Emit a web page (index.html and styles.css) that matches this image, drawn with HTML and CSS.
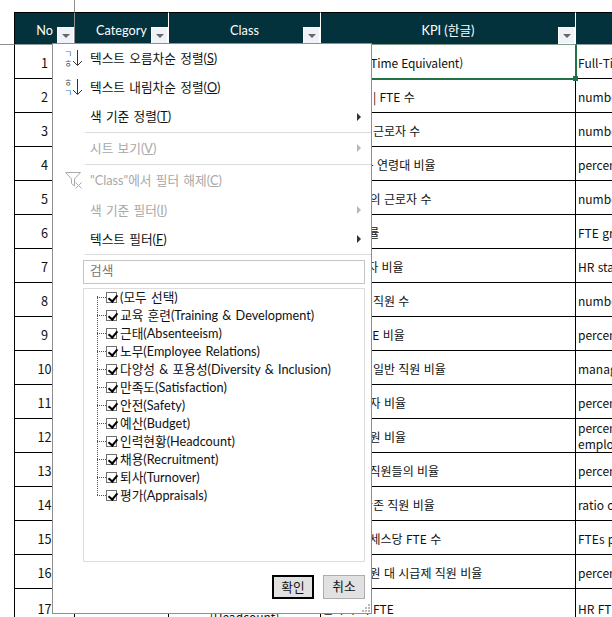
FILE: index.html
```html
<!DOCTYPE html>
<html lang="ko">
<head>
<meta charset="utf-8">
<title>KPI 필터</title>
<link rel="stylesheet" href="styles.css">
</head>
<body>
<main class="sheet">
  <table class="grid">
    <colgroup><col class="c-no"><col class="c-cat"><col class="c-class"><col class="c-kpi"><col class="c-desc"></colgroup>
    <thead>
      <tr>
        <th class="th-no">No<span class="drop"></span></th>
        <th>Category<span class="drop"></span></th>
        <th>Class<span class="drop"></span></th>
        <th>KPI (한글)<span class="drop"></span></th>
        <th></th>
      </tr>
    </thead>
    <tbody>
      <tr><td class="num">1</td><td></td><td></td><td class="kpi selected">FTE(Full-Time Equivalent)<span class="handle"></span></td><td class="desc">Full-Time Equivalent</td></tr>
      <tr><td class="num">2</td><td></td><td></td><td class="kpi">해당 부서 | FTE 수</td><td class="desc">number of FTE</td></tr>
      <tr><td class="num">3</td><td></td><td></td><td class="kpi">파트 타임 근로자 수</td><td class="desc">number of workers</td></tr>
      <tr><td class="num">4</td><td></td><td></td><td class="kpi">평균근무 - 연령대 비율</td><td class="desc">percentage of age</td></tr>
      <tr><td class="num">5</td><td></td><td></td><td class="kpi">파트 타임의 근로자 수</td><td class="desc">number of workers</td></tr>
      <tr><td class="num">6</td><td></td><td></td><td class="kpi">FTE 성장률</td><td class="desc">FTE growth</td></tr>
      <tr><td class="num">7</td><td></td><td></td><td class="kpi">HR 담당 자 비율</td><td class="desc">HR staff ratio</td></tr>
      <tr><td class="num">8</td><td></td><td></td><td class="kpi">파트 타임 직원 수</td><td class="desc">number of staff</td></tr>
      <tr><td class="num">9</td><td></td><td></td><td class="kpi">계약직 FTE 비율</td><td class="desc">percentage of FTE</td></tr>
      <tr><td class="num">10</td><td></td><td></td><td class="kpi">관리자 대 일반 직원 비율</td><td class="desc">management ratio</td></tr>
      <tr><td class="num">11</td><td></td><td></td><td class="kpi">여성 근로자 비율</td><td class="desc">percentage of women</td></tr>
      <tr><td class="num">12</td><td></td><td></td><td class="kpi">장애인 직원 비율</td><td class="desc two">percentage of<br>employees</td></tr>
      <tr><td class="num">13</td><td></td><td></td><td class="kpi">교육받은 직원들의 비율</td><td class="desc">percentage of staff</td></tr>
      <tr><td class="num">14</td><td></td><td></td><td class="kpi">입사 후 잔존 직원 비율</td><td class="desc">ratio of staff</td></tr>
      <tr><td class="num">15</td><td></td><td></td><td class="kpi">핵심 프로세스당 FTE 수</td><td class="desc">FTEs per process</td></tr>
      <tr><td class="num">16</td><td></td><td></td><td class="kpi">정규직 직원 대 시급제 직원 비율</td><td class="desc">percentage of staff</td></tr>
      <tr class="tall"><td class="num">17</td><td></td><td class="center">인력현황<br>(Headcount)</td><td class="kpi">인사 부서 FTE</td><td class="desc">HR FTE</td></tr>
    </tbody>
  </table>

  <section class="menu">
    <div class="item h29">
      <svg class="icon" width="18" height="18" viewBox="0 0 18 18"><text class="ic-blue" x="-1" y="7" font-size="9">ㄱ</text><text class="ic-gray" x="-1" y="17" font-size="9">ㅎ</text><path class="ic-arrow" d="M12.500 0v15M8 11l4.500 4.500 4.500-4.500"/></svg>
      <span>텍스트 오름차순 정렬(<u>S</u>)</span>
    </div>
    <div class="item h29">
      <svg class="icon" width="18" height="18" viewBox="0 0 18 18"><text class="ic-gray" x="-1" y="7" font-size="9">ㅎ</text><text class="ic-blue" x="-1" y="17" font-size="9">ㄱ</text><path class="ic-arrow" d="M12.500 0v15M8 11l4.500 4.500 4.500-4.500"/></svg>
      <span>텍스트 내림차순 정렬(<u>O</u>)</span>
    </div>
    <div class="item h29 plain"><span>색 기준 정렬(<u>T</u>)</span><i class="chev"></i></div>
    <hr class="sep">
    <div class="item h30 low plain off"><span>시트 보기(<u>V</u>)</span><i class="chev"></i></div>
    <hr class="sep">
    <div class="item h30 low off">
      <svg class="icon" width="18" height="18" viewBox="0 0 18 18"><path class="ic-funnel" d="M.5 1.500h15l-6 6.500v7l-3-2.500v-4.500z"/><path class="ic-x" d="M10.500 11.500l6 6M16.500 11.500l-6 6"/></svg>
      <span>"Class"에서 필터 해제(<u>C</u>)</span>
    </div>
    <div class="item h29 low plain off"><span>색 기준 필터(<u>I</u>)</span><i class="chev"></i></div>
    <div class="item h29 low plain"><span>텍스트 필터(<u>F</u>)</span><i class="chev"></i></div>
    <hr class="sep">
    <div class="search">검색</div>
    <div class="list">
      <ul class="tree">
        <li><span class="dots"></span><span class="box"></span><span class="label">(모두 선택)</span></li>
        <li><span class="dots"></span><span class="box"></span><span class="label">교육 훈련(Training &amp; Development)</span></li>
        <li><span class="dots"></span><span class="box"></span><span class="label">근태(Absenteeism)</span></li>
        <li><span class="dots"></span><span class="box"></span><span class="label">노무(Employee Relations)</span></li>
        <li><span class="dots"></span><span class="box"></span><span class="label">다양성 &amp; 포용성(Diversity &amp; Inclusion)</span></li>
        <li><span class="dots"></span><span class="box"></span><span class="label">만족도(Satisfaction)</span></li>
        <li><span class="dots"></span><span class="box"></span><span class="label">안전(Safety)</span></li>
        <li><span class="dots"></span><span class="box"></span><span class="label">예산(Budget)</span></li>
        <li><span class="dots"></span><span class="box"></span><span class="label">인력현황(Headcount)</span></li>
        <li><span class="dots"></span><span class="box"></span><span class="label">채용(Recruitment)</span></li>
        <li><span class="dots"></span><span class="box"></span><span class="label">퇴사(Turnover)</span></li>
        <li><span class="dots"></span><span class="box"></span><span class="label">평가(Appraisals)</span></li>
      </ul>
    </div>
    <div class="actions">
      <button class="btn primary">확인</button>
      <button class="btn">취소</button>
    </div>
    <svg class="grip" width="9" height="8" viewBox="0 0 9 8"><path d="M6 0h2v2H6zM3 3h2v2H3zM6 3h2v2H6zM0 6h2v2H0zM3 6h2v2H3zM6 6h2v2H6z"/></svg>
  </section>
</main>
</body>
</html>
```
FILE: styles.css
```css
* { box-sizing: border-box; }
html, body { margin: 0; height: 617px; overflow: hidden; background: #fff; }
body { font-family: Lato, "Noto Sans CJK KR", sans-serif; font-size: 12.7px; color: #111; }

.sheet { position: relative; width: 612px; height: 617px; overflow: hidden; padding: 12px 0 0 14px; }
.sheet::before { content: ""; position: absolute; left: 74px; top: 0; width: 1px; height: 12px; background: #8f8f8f; }
.sheet::after { content: ""; position: absolute; left: 0; top: 44px; width: 14px; height: 1px; background: #8f8f8f; }

.grid { border-collapse: separate; border-spacing: 0; table-layout: fixed; width: 762px; }
.c-no { width: 61px; }
.c-cat { width: 94px; }
.c-class { width: 152px; }
.c-kpi { width: 255px; }
.c-desc { width: 200px; }

th { position: relative; height: 33px; background: #03323c; color: #fff; font-weight: 400; font-size: 12.7px; padding: 2px 0 0; border-top: 1px solid #000; border-right: 1px solid #fff; border-bottom: 1px solid #8f9a9c; }
th:first-child { border-left: 1px solid #000; }
.th-no { border-right-color: #8f8f8f; }
th:last-child { border-right: 0; }

.drop { position: absolute; right: 0; bottom: 0; width: 17px; height: 17px; background: #eff2f6; border: 1px solid #fff; }
.drop::after { content: ""; position: absolute; left: 4px; top: 6px; border-style: solid; border-width: 4px 4px 0; border-color: #666 transparent transparent; }

td { position: relative; height: 34px; padding: 3px 0 0; font-family: "Noto Sans CJK KR", sans-serif; font-size: 12px; border-right: 1px solid #000; border-bottom: 1px solid #000; line-height: 16px; white-space: nowrap; }
td:first-child { border-left: 1px solid #000; }
td:last-child { border-right: 0; }
.tall td { height: 38px; }
.num { text-align: center; font-size: 12.7px; }
.center { text-align: center; }
.kpi { padding-left: 1px; }
.selected { letter-spacing: -.15px; }
.desc { padding-left: 2px; overflow: hidden; }
.desc.two { padding-top: 0; line-height: 16px; }

.selected::after { content: ""; position: absolute; left: -1px; top: -1px; right: -2px; bottom: -2px; border: 2px solid #217346; border-top-width: 1px; border-top-color: #7f9c8c; }
.handle { position: absolute; z-index: 1; right: -3px; bottom: -3px; width: 5px; height: 5px; background: #217346; }

.menu { position: absolute; left: 52px; top: 43px; width: 320px; height: 571px; display: flex; flex-direction: column; word-spacing: 1px; background: #fff; border: 1px solid #8f8f8f; }
.item { display: flex; align-items: center; gap: 7px; padding-left: 12px; }
.item > span { padding-bottom: 3px; }
.item.low > span { padding-bottom: 1px; }
.plain { padding-left: 37px; }
.h29 { height: 29px; flex: none; }
.h30 { height: 30px; flex: none; }
.off { color: #a8a8a8; }
.icon { flex: none; overflow: visible; }
.ic-blue { fill: #2b79c2; font-family: "Noto Sans CJK KR", sans-serif; }
.ic-gray { fill: #555; font-family: "Noto Sans CJK KR", sans-serif; }
.ic-arrow { fill: none; stroke: #333; stroke-width: 1; }
.ic-funnel { fill: none; stroke: #aaa; stroke-width: 1; }
.ic-x { fill: none; stroke: #aaa; stroke-width: 1; }
.chev { margin-left: auto; margin-right: 10px; border-style: solid; border-width: 4px 0 4px 4px; border-color: transparent transparent transparent #333; }
.off .chev { border-left-color: #b8b8b8; }
.sep { flex: none; height: 1px; margin: 1px 0 0 32px; border: 0; background: #dcdcdc; }

.search { flex: none; height: 24px; margin: 5px 6px 0 30px; padding: 0 6px; line-height: 18px; color: #777; border: 1px solid #c4c4c4; }
.list { flex: none; height: 274px; margin: 4px 6px 0 30px; border: 1px solid #dcdcdc; }
.tree { position: relative; list-style: none; margin: -1px 0 0 13px; padding: 0; }
.tree::before { content: ""; position: absolute; left: 0; top: 8px; bottom: 9px; border-left: 1px dotted #555; }
.tree li { display: flex; align-items: center; height: 18px; }
.label { padding-bottom: 2px; }
.dots { flex: none; width: 9px; border-top: 1px dotted #555; }
.box { flex: none; position: relative; width: 11px; height: 11px; margin-right: 3px; border: 1px solid #707070; background: #fff; }
.box::after { content: ""; position: absolute; left: 2.500px; top: .500px; width: 4px; height: 7px; border: solid #000; border-width: 0 2px 2px 0; transform: rotate(40deg); }

.actions { flex: none; display: flex; justify-content: flex-end; gap: 9px; margin: 13px 6px 0 0; }
.btn { width: 42px; height: 24px; padding: 0 0 3px; font: inherit; color: #111; background: #e1e1e1; border: 1px solid #adadad; border-radius: 0; }
.primary { border: 2px solid #000; }
.grip { position: absolute; right: 0; bottom: 1px; }
.grip path { fill: #b9b9b9; }
```
